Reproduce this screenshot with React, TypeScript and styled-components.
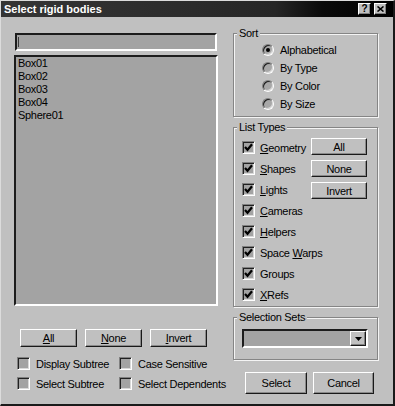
import React from "react";
import styled, { createGlobalStyle } from "styled-components";

const Global = createGlobalStyle`
  html, body { margin: 0; padding: 0; background: #c0c0c0; }
  #root { width: 395px; height: 406px; }
`;

const Window = styled.div`
  box-sizing: border-box;
  width: 395px;
  height: 406px;
  background: #c0c0c0;
  border-style: solid;
  border-width: 1px 2px 2px 1px;
  border-color: #dcdcdc #1a1a1a #1a1a1a #dcdcdc;
  display: flex;
  flex-direction: column;
  font-family: "Liberation Sans", Arial, sans-serif;
  font-size: 11px;
  letter-spacing: -0.3px;
  color: #000;
`;

const TitleBar = styled.div`
  height: 16px;
  flex: none;
  display: flex;
  align-items: center;
  justify-content: space-between;
  padding: 0 6px 0 3px;
  background: linear-gradient(90deg, #353535 0%, #2c2c2c 45%, #262626 70%, #0a0a0a 82%, #000 100%);
`;

const TitleText = styled.span`
  color: #fff;
  font-weight: bold;
  font-size: 11px;
  letter-spacing: 0;
  line-height: 16px;
`;

const TitleButtons = styled.div`
  display: flex;
  gap: 3px;
`;

const TitleButton = styled.div`
  box-sizing: border-box;
  width: 13px;
  height: 12px;
  background: #c0c0c0;
  border-style: solid;
  border-width: 1px;
  border-color: #fff #000 #000 #fff;
  box-shadow: inset -1px -1px #808080;
  display: flex;
  align-items: center;
  justify-content: center;
  font-weight: bold;
  font-size: 10px;
  line-height: 10px;
  letter-spacing: 0;
`;

const Body = styled.div`
  flex: 1;
  display: flex;
  gap: 15px;
  padding: 10px 0 0 13px;
`;

const LeftColumn = styled.div`
  width: 204px;
  padding-top: 6px;
  display: flex;
  flex-direction: column;
`;

const Sunken = styled.div`
  box-sizing: border-box;
  background: #a3a3a3;
  border-style: solid;
  border-width: 2px;
  border-color: #1c1c1c #fff #fff #1c1c1c;
`;

const SearchField = styled(Sunken)`
  height: 18px;
  margin: 0 1px;
  display: flex;
  align-items: center;
  padding-left: 1px;
`;

const Caret = styled.span`
  width: 1px;
  height: 10px;
  background: #3a3a3a;
`;

const ListBox = styled(Sunken)`
  margin-top: 4px;
  height: 251px;
  padding: 0 2px;
  display: flex;
  flex-direction: column;
`;

const ListItem = styled.div`
  line-height: 13px;
  height: 13px;
`;

const PushButton = styled.div<{ $w: number; $h: number }>`
  box-sizing: border-box;
  width: ${(p) => p.$w}px;
  height: ${(p) => p.$h}px;
  background: #c0c0c0;
  border-style: solid;
  border-width: 1px;
  border-color: #fff #1a1a1a #1a1a1a #fff;
  box-shadow: inset -1px -1px #8a8a8a;
  display: flex;
  align-items: center;
  justify-content: center;
  flex: none;
`;

const ButtonRow = styled.div`
  margin-top: 23px;
  padding-left: 6px;
  display: flex;
  gap: 8px;
`;

const OptionGrid = styled.div`
  margin-top: 10px;
  padding-left: 3px;
  display: grid;
  grid-template-columns: 102px auto;
  row-gap: 7px;
`;

const CheckItem = styled.label<{ $gap?: number }>`
  display: flex;
  align-items: center;
  gap: ${(p) => p.$gap ?? 6}px;
  height: 13px;
  white-space: nowrap;
`;

const Box = styled.span`
  box-sizing: border-box;
  width: 13px;
  height: 13px;
  flex: none;
  background: #a3a3a3;
  border-style: solid;
  border-width: 1px;
  border-color: #808080 #fff #fff #808080;
  box-shadow: inset 1px 1px #202020, inset -1px -1px #d8d8d8;
  display: flex;
  align-items: center;
  justify-content: center;
`;

const RightColumn = styled.div`
  width: 145px;
  display: flex;
  flex-direction: column;
`;

const Group = styled.fieldset<{ $mt: number; $pt: number; $pb: number }>`
  margin: ${(p) => p.$mt}px 0 0 0;
  padding: ${(p) => p.$pt}px 0 ${(p) => p.$pb}px 3px;
  border: 1px solid #858585;
  box-shadow: inset 1px 1px #f4f4f4, 1px 1px #f4f4f4;
  min-width: 0;
`;

const Legend = styled.legend`
  padding: 0 2px;
  line-height: 12px;
  background: #c0c0c0;
`;

const RadioList = styled.div`
  padding-left: 25px;
  display: flex;
  flex-direction: column;
`;

const RadioRow = styled.label`
  height: 18px;
  display: flex;
  align-items: center;
  gap: 6px;
`;

const Radio = styled.span`
  box-sizing: border-box;
  width: 12px;
  height: 12px;
  border-radius: 50%;
  background: #a8a8a8;
  border: 1px solid;
  border-color: #808080 #fff #fff #808080;
  box-shadow: inset 1px 1px #1e1e1e, inset -1px -1px #d8d8d8;
  display: flex;
  align-items: center;
  justify-content: center;
`;

const Dot = styled.span`
  width: 4px;
  height: 4px;
  border-radius: 50%;
  background: #000;
`;

const TypesGrid = styled.div`
  padding-left: 5px;
  display: grid;
  grid-template-columns: 69px 56px;
`;

const TypeList = styled.div`
  display: flex;
  flex-direction: column;
`;

const TypeRow = styled.div`
  height: 21px;
  display: flex;
  align-items: center;
`;

const SideButtons = styled.div`
  padding-top: 1px;
  display: flex;
  flex-direction: column;
  gap: 5px;
`;

const Dropdown = styled(Sunken)`
  margin-left: 5px;
  width: 126px;
  height: 19px;
  display: flex;
  justify-content: flex-end;
`;

const ArrowButton = styled.span`
  box-sizing: border-box;
  width: 16px;
  height: 15px;
  background: #c0c0c0;
  border-style: solid;
  border-width: 1px;
  border-color: #fff #1a1a1a #1a1a1a #fff;
  box-shadow: inset -1px -1px #808080;
  display: flex;
  align-items: center;
  justify-content: center;
`;

const DialogButtons = styled.div`
  margin-top: 12px;
  padding-left: 12px;
  display: flex;
  gap: 6px;
`;

const Check = ({ on }: { on: boolean }) => (
  <Box>
    {on && (
      <svg width="9" height="9" viewBox="0 0 9 9">
        <polyline points="1,4 3.5,6.8 8,1.2" fill="none" stroke="#000" strokeWidth="2.2" />
      </svg>
    )}
  </Box>
);

const items = ["Box01", "Box02", "Box03", "Box04", "Sphere01"];

const sorts = ["Alphabetical", "By Type", "By Color", "By Size"];

const types: React.ReactNode[] = [
  <><u>G</u>eometry</>,
  <><u>S</u>hapes</>,
  <><u>L</u>ights</>,
  <><u>C</u>ameras</>,
  <><u>H</u>elpers</>,
  <>Space <u>W</u>arps</>,
  <>Groups</>,
  <><u>X</u>Refs</>,
];

export default function App() {
  return (
    <>
      <Global />
      <Window>
        <TitleBar>
          <TitleText>Select rigid bodies</TitleText>
          <TitleButtons>
            <TitleButton>?</TitleButton>
            <TitleButton>
              <svg width="7" height="6" viewBox="0 0 7 6">
                <path d="M0.5 0.5 L6.5 5.5 M6.5 0.5 L0.5 5.5" stroke="#000" strokeWidth="1.6" />
              </svg>
            </TitleButton>
          </TitleButtons>
        </TitleBar>
        <Body>
          <LeftColumn>
            <SearchField>
              <Caret />
            </SearchField>
            <ListBox>
              {items.map((i) => (
                <ListItem key={i}>{i}</ListItem>
              ))}
            </ListBox>
            <ButtonRow>
              <PushButton $w={57} $h={18}>
                <u>A</u>ll
              </PushButton>
              <PushButton $w={57} $h={18}>
                <u>N</u>one
              </PushButton>
              <PushButton $w={57} $h={18}>
                <u>I</u>nvert
              </PushButton>
            </ButtonRow>
            <OptionGrid>
              <CheckItem>
                <Check on={false} />
                Display Subtree
              </CheckItem>
              <CheckItem>
                <Check on={false} />
                Case Sensitive
              </CheckItem>
              <CheckItem>
                <Check on={false} />
                Select Subtree
              </CheckItem>
              <CheckItem>
                <Check on={false} />
                Select Dependents
              </CheckItem>
            </OptionGrid>
          </LeftColumn>
          <RightColumn>
            <Group $mt={0} $pt={2} $pb={3}>
              <Legend>Sort</Legend>
              <RadioList>
                {sorts.map((s, i) => (
                  <RadioRow key={s}>
                    <Radio>{i === 0 && <Dot />}</Radio>
                    {s}
                  </RadioRow>
                ))}
              </RadioList>
            </Group>
            <Group $mt={4} $pt={4} $pb={1}>
              <Legend>List Types</Legend>
              <TypesGrid>
                <TypeList>
                  {types.map((t, i) => (
                    <TypeRow key={i}>
                      <CheckItem $gap={5}>
                        <Check on />
                        <span>{t}</span>
                      </CheckItem>
                    </TypeRow>
                  ))}
                </TypeList>
                <SideButtons>
                  <PushButton $w={56} $h={17}>All</PushButton>
                  <PushButton $w={56} $h={17}>None</PushButton>
                  <PushButton $w={56} $h={17}>Invert</PushButton>
                </SideButtons>
              </TypesGrid>
            </Group>
            <Group $mt={4} $pt={6} $pb={11}>
              <Legend>Selection Sets</Legend>
              <Dropdown>
                <ArrowButton>
                  <svg width="7" height="4" viewBox="0 0 7 4">
                    <path d="M0 0 H7 L3.5 4 Z" fill="#000" />
                  </svg>
                </ArrowButton>
              </Dropdown>
            </Group>
            <DialogButtons>
              <PushButton $w={62} $h={22}>Select</PushButton>
              <PushButton $w={61} $h={22}>Cancel</PushButton>
            </DialogButtons>
          </RightColumn>
        </Body>
      </Window>
    </>
  );
}
